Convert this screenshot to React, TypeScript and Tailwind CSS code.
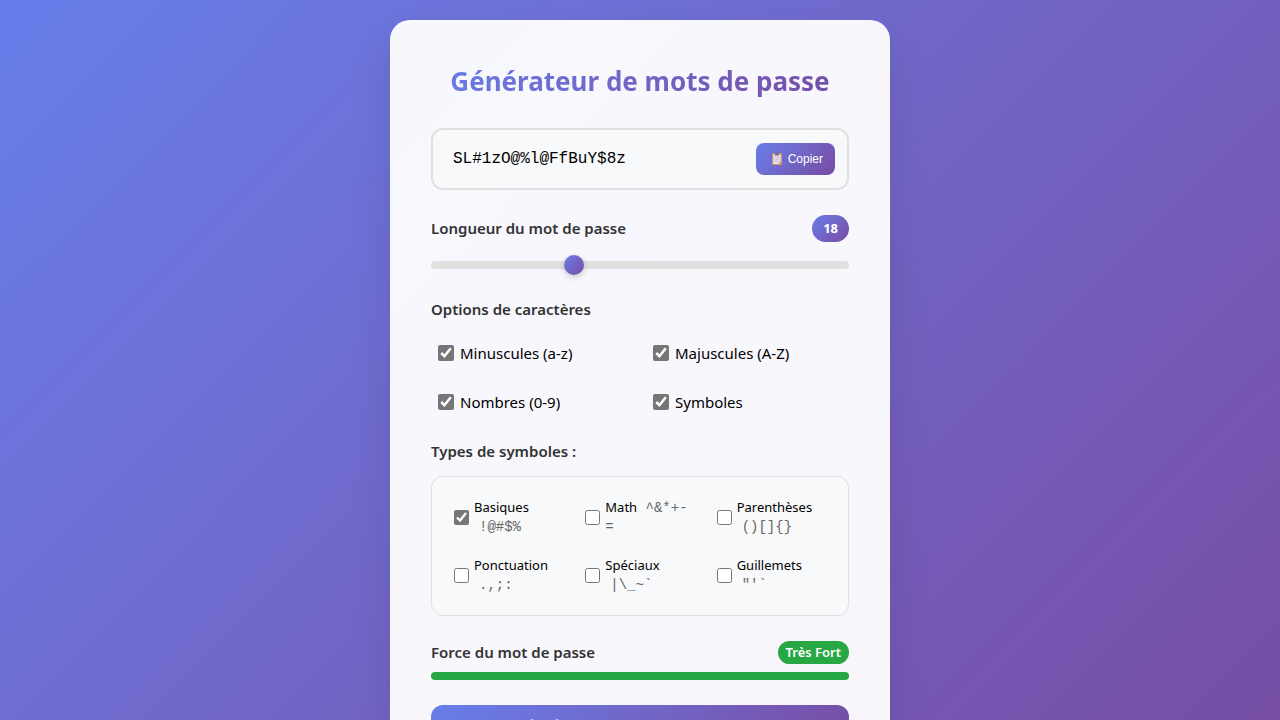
import { useState } from 'react';

const heading = 'text-[15px] leading-[21px] font-semibold text-[#333]';

const characterSets = [
  { id: 'lower', text: 'Minuscules (a-z)' },
  { id: 'upper', text: 'Majuscules (A-Z)' },
  { id: 'digits', text: 'Nombres (0-9)' },
  { id: 'symbols', text: 'Symboles' },
];

const symbolSets = [
  { id: 'basic', text: 'Basiques', sample: '!@#$%', on: true },
  { id: 'math', text: 'Math', sample: '^&*+-=', on: false },
  { id: 'brackets', text: 'Parenthèses', sample: '()[]{}', on: false },
  { id: 'punctuation', text: 'Ponctuation', sample: '.,;:', on: false },
  { id: 'special', text: 'Spéciaux', sample: '|\\_~`', on: false },
  { id: 'quotes', text: 'Guillemets', sample: '"\'`', on: false },
];

function ClipboardIcon() {
  return (
    <svg viewBox="0 0 12 14" className="h-3.5 w-3" aria-hidden="true">
      <rect x="1" y="1.2" width="10" height="11.8" rx="0.6" fill="#cf9070" />
      <path d="M2.2 2.6h7.6v7L7.8 12H2.2z" fill="#e6def0" />
      <path d="M9.8 9.6 7.8 12V9.6z" fill="#b9aecb" />
      <path d="M3.5 5.4h5M3.5 7.2h5M3.5 9h3" stroke="#b9b0cb" strokeWidth="0.7" />
      <path d="M4 1.4h1a1 1 0 0 1 2 0h1v2H4z" fill="#6f6f8c" />
    </svg>
  );
}

export default function App() {
  const [length, setLength] = useState(18);

  return (
    <div className="min-h-screen bg-linear-135 from-[#667eea] to-[#764ba2] p-5 font-['Noto_Sans',sans-serif] text-black">
      <main className="mx-auto max-w-[500px] rounded-[20px] border border-white/20 bg-white/95 p-10 shadow-[0_20px_40px_rgba(0,0,0,0.1)]">
        <h1 className="mb-[26px] bg-linear-135 from-[#667eea] to-[#764ba2] bg-clip-text text-center text-[26px] leading-[41px] font-bold text-transparent">
          Générateur de mots de passe
        </h1>

        <div className="mb-[25px] flex items-center justify-between rounded-xl border-2 border-[#e0e0e0] bg-[#f8f9fa] py-[13px] pr-3 pl-5">
          <output className="font-['Liberation_Mono',monospace] text-base">SL#1zO@%l@FfBuY$8z</output>
          <button
            type="button"
            className="flex h-8 items-center gap-[5px] rounded-lg bg-linear-135 from-[#667eea] to-[#764ba2] pr-3 pl-[15px] font-['Liberation_Sans',sans-serif] text-xs font-medium text-white"
          >
            <ClipboardIcon />
            Copier
          </button>
        </div>

        <section className="mb-6">
          <div className="mb-[13px] flex items-center justify-between">
            <label htmlFor="length" className={heading}>Longueur du mot de passe</label>
            <span className="rounded-full bg-linear-135 from-[#667eea] to-[#764ba2] px-[11px] py-[3px] text-[13px] leading-[21px] font-bold text-white">
              {length}
            </span>
          </div>
          <div className="flex h-5 items-center">
            <input
              id="length"
              type="range"
              min="4"
              max="46"
              value={length}
              onChange={(e) => setLength(Number(e.target.value))}
              className="h-2 w-full cursor-pointer appearance-none rounded bg-[#e0e0e0] outline-none [&::-webkit-slider-thumb]:size-5 [&::-webkit-slider-thumb]:appearance-none [&::-webkit-slider-thumb]:rounded-full [&::-webkit-slider-thumb]:bg-linear-135 [&::-webkit-slider-thumb]:from-[#667eea] [&::-webkit-slider-thumb]:to-[#764ba2] [&::-webkit-slider-thumb]:shadow-[0_2px_6px_rgba(0,0,0,0.2)]"
            />
          </div>
        </section>

        <section className="mb-5">
          <h2 className={`mb-[15px] ${heading}`}>Options de caractères</h2>
          <div className="grid grid-cols-2 gap-3">
            {characterSets.map((set) => (
              <label key={set.id} className="flex items-center gap-1.5 px-[7px] py-2 text-[15px] leading-[21px]">
                <input type="checkbox" defaultChecked className="mb-0.5 size-4 accent-[#767676]" />
                {set.text}
              </label>
            ))}
          </div>
        </section>

        <section className="mb-[25px]">
          <h2 className={`mb-3.5 ${heading}`}>Types de symboles :</h2>
          <div className="grid grid-cols-3 gap-2 rounded-xl border border-[#e0e0e0] bg-[#f8f9fa] p-[15px]">
            {symbolSets.map((set) => (
              <label key={set.id} className="flex items-center gap-[5px] py-1.5 pr-1.5 pl-[7px] text-[13px] leading-[19px]">
                <input type="checkbox" defaultChecked={set.on} className="size-[15px] shrink-0 accent-[#767676]" />
                <span>
                  {set.text}{' '}
                  <span className="ml-[5px] font-['Liberation_Mono',monospace] text-sm leading-none text-[#666]">
                    {set.sample}
                  </span>
                </span>
              </label>
            ))}
          </div>
        </section>

        <section className="mb-[25px]">
          <div className="mb-2 flex items-center justify-between">
            <h2 className={heading}>Force du mot de passe</h2>
            <span className="rounded-full bg-[#28a745] px-2 py-0.5 text-[13px] leading-[19px] font-semibold text-white">
              Très Fort
            </span>
          </div>
          <div className="h-2 rounded bg-[#28a745]" />
        </section>

        <button
          type="button"
          className="h-[50px] w-full rounded-xl bg-linear-135 from-[#667eea] to-[#764ba2] font-['Liberation_Sans',sans-serif] text-lg font-bold text-white uppercase"
        >
          Générer un mot de passe
        </button>
      </main>
    </div>
  );
}
